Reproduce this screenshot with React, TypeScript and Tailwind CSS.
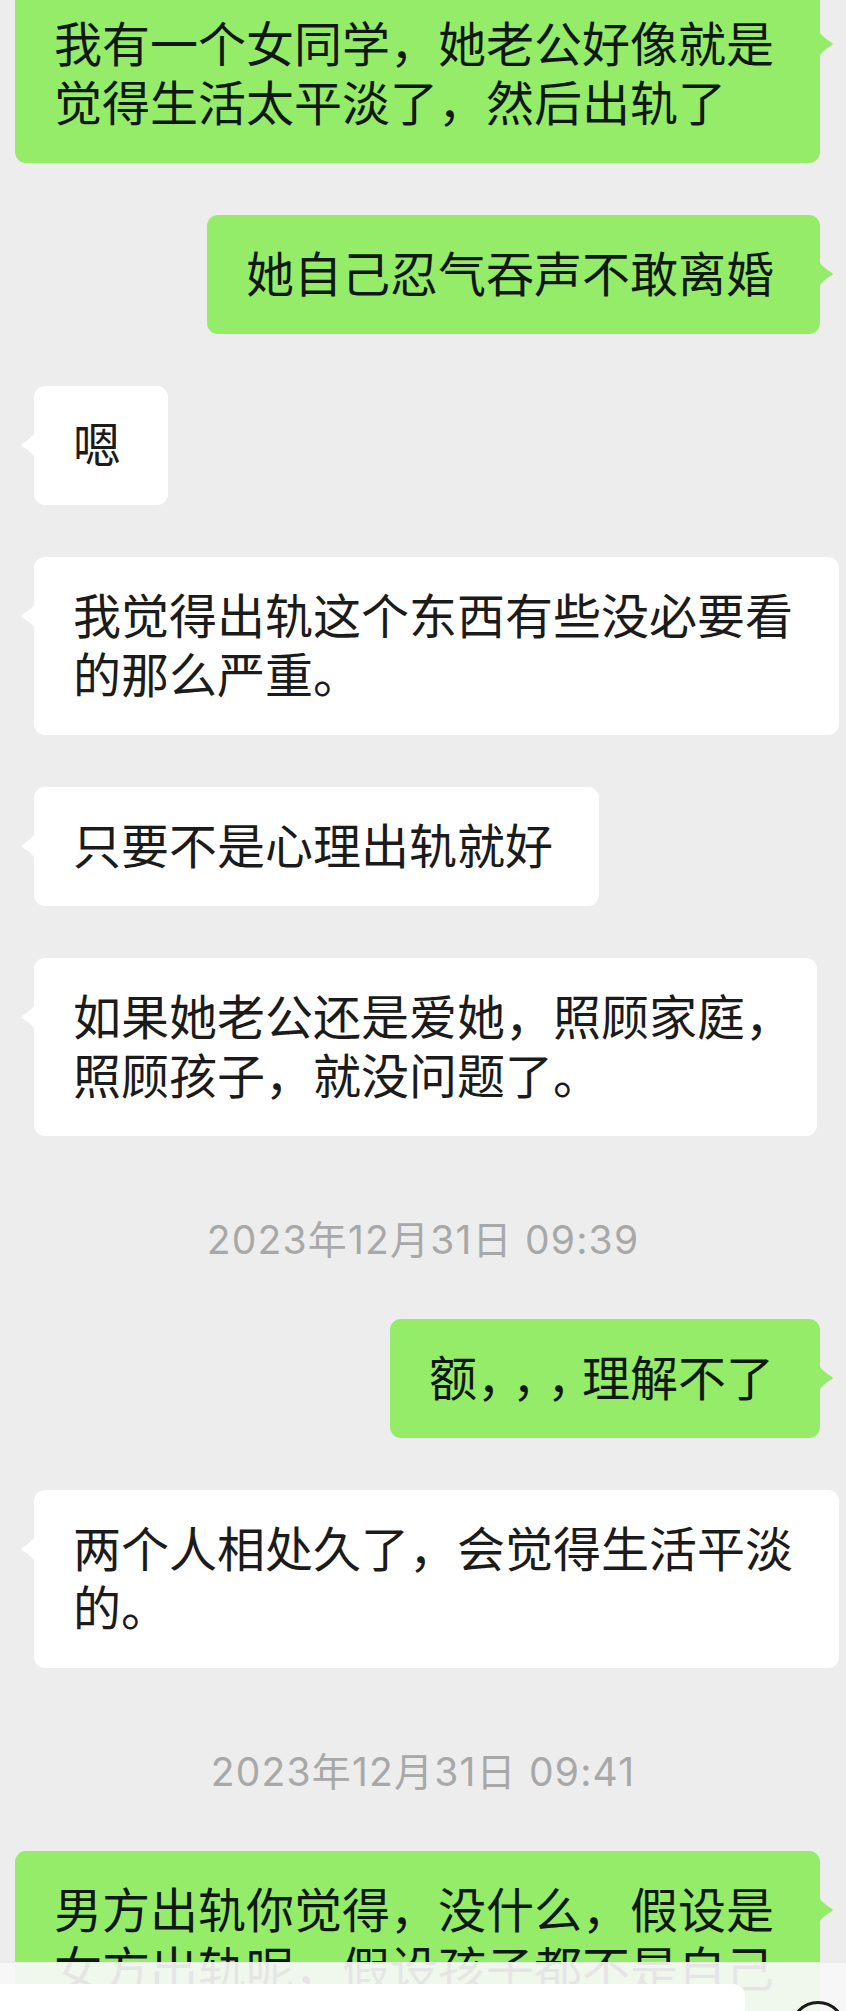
import React from 'react';

type Line = React.ReactNode;

type Item =
  | { kind: 'me' | 'them'; lines: Line[] }
  | { kind: 'time'; text: string };

const items: Item[] = [
  { kind: 'me', lines: ['我有一个女同学，她老公好像就是', '觉得生活太平淡了，然后出轨了'] },
  { kind: 'me', lines: ['她自己忍气吞声不敢离婚'] },
  { kind: 'them', lines: ['嗯'] },
  { kind: 'them', lines: ['我觉得出轨这个东西有些没必要看', '的那么严重。'] },
  { kind: 'them', lines: ['只要不是心理出轨就好'] },
  {
    kind: 'them',
    lines: [
      <>
        如果她老公还是爱她，照顾家庭<span className="tracking-[-22px]">，</span>
      </>,
      '照顾孩子，就没问题了。',
    ],
  },
  { kind: 'time', text: '2023年12月31日 09:39' },
  {
    kind: 'me',
    lines: [
      <>
        额<span className="tracking-[-13px]">，，，</span>理解不了
      </>,
    ],
  },
  { kind: 'them', lines: ['两个人相处久了，会觉得生活平淡', '的。'] },
  { kind: 'time', text: '2023年12月31日 09:41' },
  { kind: 'me', lines: ['男方出轨你觉得，没什么，假设是', '女方出轨呢，假设孩子都不是自己'] },
];

function Tail({ me }: { me: boolean }) {
  return (
    <svg
      viewBox="0 0 16 26"
      className={`absolute top-[46px] w-[16px] h-[26px] ${me ? '-right-[15px]' : '-left-[15px] -scale-x-100'}`}
    >
      <path d="M0 0 Q2 5 12 11.2 Q15.5 13 12 14.8 Q2 21 0 26 Z" fill="currentColor" />
    </svg>
  );
}

function Bubble({ me, lines }: { me: boolean; lines: Line[] }) {
  return (
    <div className={`flex ${me ? 'justify-end pr-[26px]' : 'justify-start pl-[34px]'}`}>
      <div
        className={`relative w-fit min-w-[134px] whitespace-nowrap rounded-[11px] pl-[39px] pr-[46px] pt-[27px] pb-[33px] text-[48px] leading-[59px] [text-spacing-trim:space-all] ${
          me ? 'bg-[#95ec69] text-[#95ec69]' : 'bg-white text-white'
        }`}
      >
        <Tail me={me} />
        <div className={me ? 'text-[#111811]' : 'text-[#1b1b1b]'}>
          {lines.map((l, i) => (
            <div key={i}>{l}</div>
          ))}
        </div>
      </div>
    </div>
  );
}

export default function App() {
  return (
    <div className="relative w-[846px] h-[2011px] overflow-hidden bg-[#ededed] font-['Noto_Sans_CJK_SC',sans-serif]">
      <div className="flex flex-col gap-[52px] -mt-[15px]">
        {items.map((it, i) =>
          it.kind === 'time' ? (
            <div
              key={i}
              className="h-[79px] pt-[28px] text-center text-[39px] leading-[48px] tracking-[1.2px] text-[#a8a8a8] font-['Inter','Noto_Sans_CJK_SC',sans-serif]"
            >
              {it.text}
            </div>
          ) : (
            <Bubble key={i} me={it.kind === 'me'} lines={it.lines} />
          )
        )}
      </div>

      {/* input bar, cut off at the bottom */}
      <div className="absolute bottom-0 left-0 right-0 h-[49px] bg-[#f7f7f7]/[0.92] border-t border-[#e4e4e4]/60 flex items-start">
        <div className="mt-[21px] w-[747px] h-[60px] bg-white rounded-tr-[12px]" />
        <div className="mt-[38px] ml-[45px] w-[56px] h-[56px] shrink-0 rounded-full border-[3px] border-[#1a1a1a]" />
      </div>
    </div>
  );
}
